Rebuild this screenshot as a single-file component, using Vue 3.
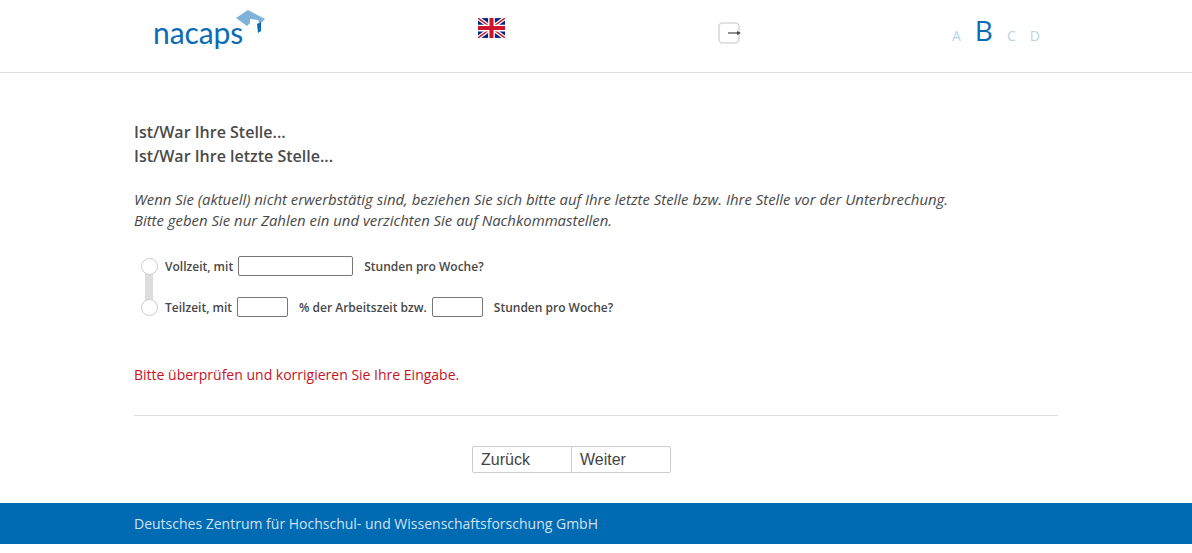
<script setup>
const letters = [
  { t: 'A', on: false },
  { t: 'B', on: true },
  { t: 'C', on: false },
  { t: 'D', on: false }
]
</script>

<template>
  <div class="page">
    <header class="top">
      <div class="logo">
        <span class="logo-text">nacaps</span>
        <svg class="logo-cap" width="32" height="28" viewBox="0 0 32 28">
          <path d="M2 8 L14 0 L31 9 L26 14 L24 10 L16 9 L16 13 L13 16 Z" fill="#7fb2d9" />
          <path d="M23 14 L27 12 L27 21 L24 23 Z" fill="#0a6cb4" />
        </svg>
      </div>
      <div class="flag-col">
        <svg class="flag" width="27" height="20" viewBox="0 0 60 44">
          <rect width="60" height="44" fill="#00247d" />
          <path d="M0 0 L60 44 M60 0 L0 44" stroke="#fff" stroke-width="9" />
          <path d="M0 0 L60 44 M60 0 L0 44" stroke="#cf142b" stroke-width="3" />
          <path d="M30 0 V44 M0 22 H60" stroke="#fff" stroke-width="15" />
          <path d="M30 0 V44 M0 22 H60" stroke="#cf142b" stroke-width="9" />
        </svg>
      </div>
      <div class="exit-col">
        <svg width="24" height="24" viewBox="0 0 24 24">
          <rect x="1" y="2" width="20" height="20" rx="3.5" fill="#fff" stroke="#d8d8d8" stroke-width="1.6" />
          <path d="M10 12 H21" stroke="#444" stroke-width="1.2" />
          <path d="M19 10 L23 12 L19 14 Z" fill="#444" />
        </svg>
      </div>
      <nav class="letters">
        <span v-for="l in letters" :key="l.t" :class="['letter', { on: l.on }]">{{ l.t }}</span>
      </nav>
    </header>

    <main class="content">
      <h2 class="q">Ist/War Ihre Stelle...<br />Ist/War Ihre letzte Stelle...</h2>
      <p class="hint">
        Wenn Sie (aktuell) nicht erwerbstätig sind, beziehen Sie sich bitte auf Ihre letzte Stelle bzw. Ihre Stelle vor der Unterbrechung.<br />
        Bitte geben Sie nur Zahlen ein und verzichten Sie auf Nachkommastellen.
      </p>

      <div class="options">
        <div class="connector"></div>
        <label class="opt first">
          <span class="radio"></span>
          <span class="lbl">Vollzeit, mit</span>
          <input class="field wide" type="text" />
          <span class="lbl after">Stunden pro Woche?</span>
        </label>
        <label class="opt">
          <span class="radio"></span>
          <span class="lbl">Teilzeit, mit</span>
          <input class="field small" type="text" />
          <span class="lbl after">% der Arbeitszeit bzw.</span>
          <input class="field small gap" type="text" />
          <span class="lbl after">Stunden pro Woche?</span>
        </label>
      </div>

      <p class="error">Bitte überprüfen und korrigieren Sie Ihre Eingabe.</p>
      <hr class="rule" />

      <div class="nav">
        <button class="btn" type="button">Zurück</button>
        <button class="btn" type="button">Weiter</button>
      </div>
    </main>

    <footer class="foot">Deutsches Zentrum für Hochschul- und Wissenschaftsforschung GmbH</footer>
  </div>
</template>

<style>
html, body { margin: 0; background: #fff; }
</style>

<style scoped>
.page {
  width: 1192px;
  height: 553px;
  overflow: hidden;
  font-family: "Open Sans", "Liberation Sans", sans-serif;
  color: #484848;
}
.top {
  height: 72px;
  border-bottom: 1px solid #ddd;
  display: flex;
  box-sizing: content-box;
}
.logo {
  width: 478px;
  padding-left: 153px;
  box-sizing: border-box;
  display: flex;
  height: 50px;
  position: relative;
}
.logo-text {
  font-family: "Lato", "Open Sans", sans-serif;
  font-size: 30px;
  line-height: 30px;
  margin-top: 17px;
  color: #0a6cb4;
  letter-spacing: -0.1px;
}
.logo-cap {
  position: absolute;
  left: 234px;
  top: 10px;
}
.flag-col {
  width: 240px;
  padding-top: 18px;
}
.flag { display: block; }
.exit-col {
  width: 234px;
  padding-top: 21px;
}
.letters {
  display: flex;
  align-items: baseline;
  height: 48px;
  line-height: 48px;
  padding-top: 6px;
}
.letter {
  font-size: 14px;
  color: #b5d3ec;
  margin-right: 14px;
}
.letter.on {
  font-size: 28px;
  color: #0a6cb4;
}
.content {
  width: 924px;
  margin-left: 134px;
  padding-top: 47px;
}
.q {
  margin: 0;
  font-size: 16px;
  line-height: 24px;
  font-weight: 600;
  color: #4a4a4a;
}
.hint {
  margin: 21px 0 0;
  font-size: 14.92px;
  line-height: 21px;
  font-style: italic;
}
.options {
  position: relative;
  margin-top: 24px;
  padding-left: 6px;
}
.connector {
  position: absolute;
  left: 11px;
  top: 14px;
  width: 8px;
  height: 41px;
  background: #ddd;
}
.opt {
  position: relative;
  display: flex;
  align-items: center;
  height: 22px;
  font-size: 12px;
  font-weight: 600;
}
.opt.first { margin-bottom: 19px; }
.radio {
  width: 15px;
  height: 15px;
  border: 1px solid #ccc;
  border-radius: 50%;
  background: #fff;
  margin-right: 7px;
  margin-left: 1px;
  flex: none;
}
.lbl { white-space: nowrap; }
.after { margin-left: 11px; }
.field {
  height: 20px;
  box-sizing: border-box;
  border: 1px solid #777;
  border-radius: 2px;
  background: #fff;
  padding: 0;
  margin: 0 0 0 5px;
  outline: none;
}
.wide { width: 115px; }
.small { width: 51px; }
.gap { margin-left: 5px; }
.error {
  margin: 47px 0 0;
  font-size: 14px;
  line-height: 20px;
  color: #c8101e;
}
.rule {
  margin: 30px 0 0;
  border: 0;
  border-top: 1px solid #ddd;
}
.nav {
  display: flex;
  margin-top: 30px;
  padding-left: 338px;
}
.btn {
  width: 100px;
  height: 27px;
  box-sizing: border-box;
  border: 1px solid #ccc;
  background: #fff;
  font-family: "Liberation Sans", Arial, sans-serif;
  font-size: 16px;
  color: #444;
  text-align: left;
  padding: 0 0 0 8px;
  border-radius: 2px 0 0 2px;
}
.btn + .btn {
  margin-left: -1px;
  border-radius: 0 2px 2px 0;
}
.foot {
  position: absolute;
  top: 503px;
  left: 0;
  width: 1192px;
  height: 41px;
  line-height: 41px;
  background: #006ab3;
  color: #cfe2f1;
  font-size: 14px;
  padding-left: 134px;
  box-sizing: border-box;
}
</style>
